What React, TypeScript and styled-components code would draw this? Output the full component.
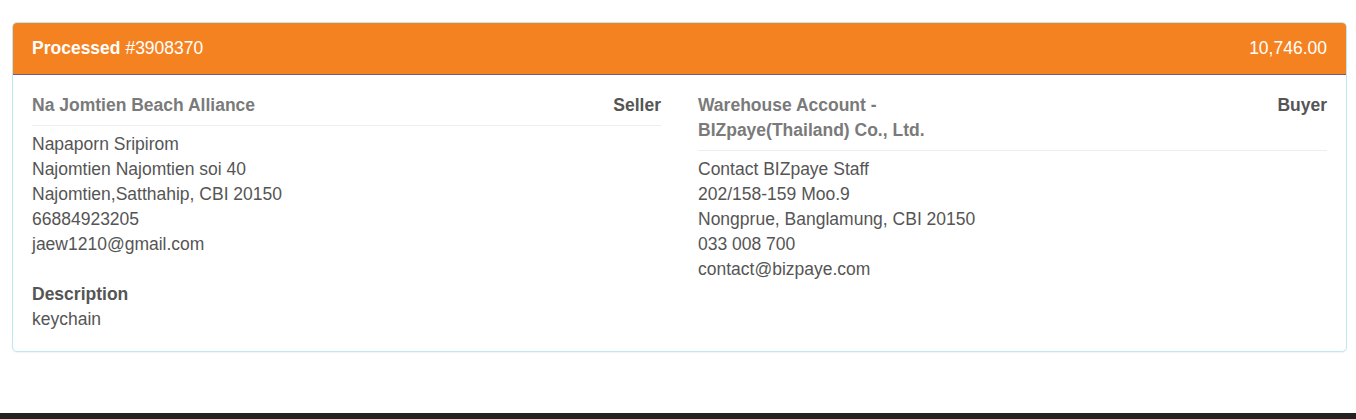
import React from "react";
import styled, { createGlobalStyle } from "styled-components";

const GlobalStyle = createGlobalStyle`
  html, body { margin: 0; padding: 0; background: #fff; }
  body {
    font-family: "Liberation Sans", Arial, Helvetica, sans-serif;
    font-size: 17.5px;
    line-height: 25px;
    color: #555;
  }
`;

const Page = styled.div`
  display: flex;
  flex-direction: column;
  height: 100vh;
  box-sizing: border-box;
  padding-top: 22px;
`;

const Panel = styled.div`
  margin: 0 9px 0 12px;
  border: 1px solid #bce8f1;
  border-radius: 5px;
  background: #fff;
  box-shadow: 0 1px 1px rgba(0, 0, 0, 0.05);
  overflow: hidden;
`;

const Heading = styled.div`
  display: flex;
  justify-content: space-between;
  align-items: center;
  background: #f58220;
  color: #fff;
  padding: 13px 19px 13px;
  border-bottom: 1px solid #6e6079;
`;

const Status = styled.strong`
  font-weight: bold;
`;

const Body = styled.div`
  display: grid;
  grid-template-columns: 1fr 1fr;
  column-gap: 37px;
  padding: 18px 19px 19px;
`;

const Party = styled.div`
  display: flex;
  flex-direction: column;
`;

const TitleRow = styled.div`
  display: flex;
  justify-content: space-between;
  align-items: flex-start;
  padding-bottom: 7px;
  border-bottom: 1px solid #eee;
  margin-bottom: 6px;
`;

const Name = styled.div`
  font-weight: bold;
  color: #7a7a7a;
  max-width: 50%;
`;

const Role = styled.div`
  font-weight: bold;
  color: #555;
`;

const Line = styled.div`
  color: #555;
`;

const Description = styled.div`
  margin-top: 25px;
`;

const Label = styled.div`
  font-weight: bold;
  color: #555;
`;

const Footer = styled.div`
  margin-top: auto;
  height: 6px;
  background: #222;
`;

type PartyInfo = {
  name: string;
  role: string;
  lines: string[];
  description?: string;
};

const parties: PartyInfo[] = [
  {
    name: "Na Jomtien Beach Alliance",
    role: "Seller",
    lines: [
      "Napaporn Sripirom",
      "Najomtien Najomtien soi 40",
      "Najomtien,Satthahip, CBI 20150",
      "66884923205",
      "jaew1210@gmail.com",
    ],
    description: "keychain",
  },
  {
    name: "Warehouse Account - BIZpaye(Thailand) Co., Ltd.",
    role: "Buyer",
    lines: [
      "Contact BIZpaye Staff",
      "202/158-159 Moo.9",
      "Nongprue, Banglamung, CBI 20150",
      "033 008 700",
      "contact@bizpaye.com",
    ],
  },
];

export default function App() {
  return (
    <>
      <GlobalStyle />
      <Page>
        <Panel>
          <Heading>
            <span>
              <Status>Processed</Status> #3908370
            </span>
            <span>10,746.00</span>
          </Heading>
          <Body>
            {parties.map((p) => (
              <Party key={p.role}>
                <TitleRow>
                  <Name>{p.name}</Name>
                  <Role>{p.role}</Role>
                </TitleRow>
                {p.lines.map((l) => (
                  <Line key={l}>{l}</Line>
                ))}
                {p.description && (
                  <Description>
                    <Label>Description</Label>
                    <Line>{p.description}</Line>
                  </Description>
                )}
              </Party>
            ))}
          </Body>
        </Panel>
        <Footer />
      </Page>
    </>
  );
}
